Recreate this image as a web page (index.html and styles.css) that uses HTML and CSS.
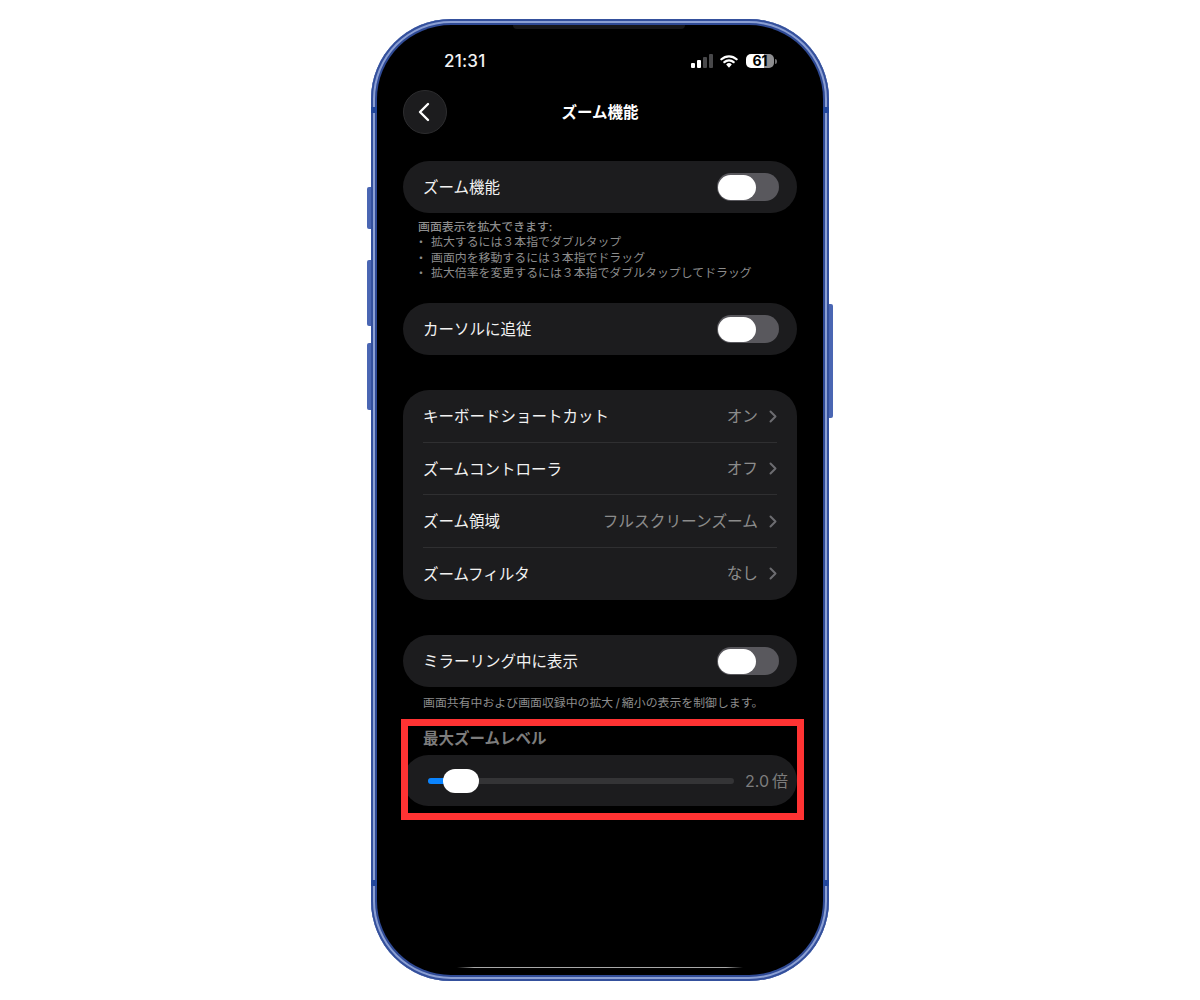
FILE: index.html
```html
<!DOCTYPE html>
<html lang="ja">
<head>
    <meta charset="UTF-8">
    <title>ズーム機能</title>
    <link rel="stylesheet" href="styles.css">
</head>
<body>
    <div class="iphone">
        <span class="side-btn btn-action"></span>
        <span class="side-btn btn-up"></span>
        <span class="side-btn btn-down"></span>
        <span class="side-btn btn-power"></span>
        <span class="band band-tl"></span>
        <span class="band band-tr"></span>
        <span class="band band-bl"></span>
        <span class="band band-br"></span>
        <div class="screen">
            <span class="island"></span>
            <div class="status-bar">
                <span class="time">21:31</span>
                <div class="status-icons">
                    <svg class="signal" width="22" height="14" viewBox="0 0 22 14">
                        <rect x="0" y="9" width="4" height="5" rx="1" fill="#fff"/>
                        <rect x="6" y="6" width="4" height="8" rx="1" fill="#fff"/>
                        <rect x="12" y="3" width="4" height="11" rx="1" fill="#48484a"/>
                        <rect x="18" y="0" width="4" height="14" rx="1" fill="#48484a"/>
                    </svg>
                    <svg class="wifi" width="18" height="14" viewBox="0 0 19 14">
                        <path d="M1.5 5.2a11.6 11.6 0 0 1 16 0" fill="none" stroke="#fff" stroke-width="2.4" stroke-linecap="round"/>
                        <path d="M4.6 8.2a7.2 7.2 0 0 1 9.8 0" fill="none" stroke="#fff" stroke-width="2.4" stroke-linecap="round"/>
                        <path d="M9.5 14l-3-3.4a4.4 4.4 0 0 1 6 0z" fill="#fff"/>
                    </svg>
                    <div class="battery"><span class="battery-num">61</span></div>
                    <span class="battery-tip"></span>
                </div>
            </div>

            <div class="nav-bar">
                <button class="back-button">
                    <svg width="14" height="20" viewBox="0 0 14 20">
                        <path d="M12 2L4 10l8 8" fill="none" stroke="#fff" stroke-width="2.4" stroke-linecap="round" stroke-linejoin="round"/>
                    </svg>
                </button>
                <h1 class="nav-title">ズーム機能</h1>
            </div>

            <div class="content">
                <div class="group">
                    <div class="row">
                        <span class="row-label">ズーム機能</span>
                        <span class="toggle"></span>
                    </div>
                </div>
                <div class="note note-list">
                    <p class="note-head">画面表示を拡大できます:</p>
                    <p class="note-item">拡大するには３本指でダブルタップ</p>
                    <p class="note-item">画面内を移動するには３本指でドラッグ</p>
                    <p class="note-item">拡大倍率を変更するには３本指でダブルタップしてドラッグ</p>
                </div>

                <div class="group group-follow">
                    <div class="row">
                        <span class="row-label">カーソルに追従</span>
                        <span class="toggle"></span>
                    </div>
                </div>

                <div class="group group-links">
                    <div class="row row-link">
                        <span class="row-label">キーボードショートカット</span>
                        <span class="row-value">オン</span>
                        <svg class="chevron" width="8" height="13" viewBox="0 0 8 13"><path d="M1.5 1.5l5 5-5 5" fill="none" stroke="#6c6c70" stroke-width="2" stroke-linecap="round" stroke-linejoin="round"/></svg>
                    </div>
                    <div class="row row-link">
                        <span class="row-label">ズームコントローラ</span>
                        <span class="row-value">オフ</span>
                        <svg class="chevron" width="8" height="13" viewBox="0 0 8 13"><path d="M1.5 1.5l5 5-5 5" fill="none" stroke="#6c6c70" stroke-width="2" stroke-linecap="round" stroke-linejoin="round"/></svg>
                    </div>
                    <div class="row row-link">
                        <span class="row-label">ズーム領域</span>
                        <span class="row-value">フルスクリーンズーム</span>
                        <svg class="chevron" width="8" height="13" viewBox="0 0 8 13"><path d="M1.5 1.5l5 5-5 5" fill="none" stroke="#6c6c70" stroke-width="2" stroke-linecap="round" stroke-linejoin="round"/></svg>
                    </div>
                    <div class="row row-link">
                        <span class="row-label">ズームフィルタ</span>
                        <span class="row-value">なし</span>
                        <svg class="chevron" width="8" height="13" viewBox="0 0 8 13"><path d="M1.5 1.5l5 5-5 5" fill="none" stroke="#6c6c70" stroke-width="2" stroke-linecap="round" stroke-linejoin="round"/></svg>
                    </div>
                </div>

                <div class="group group-mirror">
                    <div class="row">
                        <span class="row-label">ミラーリング中に表示</span>
                        <span class="toggle"></span>
                    </div>
                </div>
                <p class="note note-mirror">画面共有中および画面収録中の拡大&#8201;/&#8201;縮小の表示を制御します。</p>

                <div class="zoom-level">
                    <h2 class="section-title">最大ズームレベル</h2>
                    <div class="slider-row">
                        <div class="slider">
                            <span class="slider-fill"></span>
                            <span class="slider-thumb"></span>
                        </div>
                        <span class="slider-value">2.0&#8201;倍</span>
                    </div>
                </div>
            </div>
            <span class="home-bar"></span>
        </div>
    </div>
    <div class="highlight"></div>
</body>
</html>
```

FILE: styles.css
```css
* {
    box-sizing: border-box;
}

html, body {
    margin: 0;
    height: 1000px;
    overflow: hidden;
}

body {
    position: relative;
    background: #fff;
    font-family: Inter, "Noto Sans CJK JP", sans-serif;
    color: #fff;
}

p, h1, h2 {
    margin: 0;
}

/* phone */
.iphone {
    position: absolute;
    left: 371px;
    top: 19px;
    width: 458px;
    height: 962px;
    border-radius: 80px;
    padding: 6px;
    background: #2f4a95;
    box-shadow: inset 0 0 0 2px #34509c, inset 0 0 0 4px #8b9fd3;
}

.side-btn {
    position: absolute;
    width: 4px;
    background: #4a66b3;
}

.btn-action {
    left: -4px;
    top: 168px;
    height: 42px;
    border-radius: 2px 0 0 2px;
}

.btn-up {
    left: -4px;
    top: 241px;
    height: 66px;
    border-radius: 2px 0 0 2px;
}

.btn-down {
    left: -4px;
    top: 324px;
    height: 67px;
    border-radius: 2px 0 0 2px;
}

.btn-power {
    right: -4px;
    top: 285px;
    height: 114px;
    border-radius: 0 2px 2px 0;
}

.band {
    position: absolute;
    width: 6px;
    height: 6px;
    background: #23479b;
}

.band-tl {
    left: 0;
    top: 88px;
}

.band-tr {
    right: 0;
    top: 88px;
}

.band-bl {
    left: 0;
    top: 861px;
}

.band-br {
    right: 0;
    top: 861px;
}

.screen {
    position: relative;
    height: 100%;
    background: #000;
    border-radius: 74px;
    overflow: hidden;
    padding: 0 26px;
    display: flex;
    flex-direction: column;
}

.island {
    position: absolute;
    left: 136px;
    top: 0;
    width: 172px;
    height: 4px;
    background: #161618;
    border-radius: 0 0 6px 6px;
}

.home-bar {
    position: absolute;
    left: 80px;
    bottom: 7px;
    width: 286px;
    height: 1px;
    background: linear-gradient(to right, #000, #a8a8a8 6%, #a8a8a8 94%, #000);
}

/* status bar */
.status-bar {
    height: 65px;
    padding: 7px 0 0 41px;
    display: flex;
    justify-content: space-between;
    align-items: center;
}

.time {
    font-size: 17px;
    font-weight: 500;
    color: #f2f2f2;
    letter-spacing: 0.2px;
}

.status-icons {
    display: flex;
    align-items: center;
    margin-right: 20px;
}

.signal {
    margin-right: 7px;
}

.wifi {
    margin-right: 8px;
}

.battery {
    width: 28px;
    height: 14px;
    border-radius: 5px;
    background: linear-gradient(to right, #fff 64%, #8e8e90 64%);
    display: flex;
    align-items: center;
    justify-content: center;
}

.battery-num {
    font-size: 14px;
    font-weight: 700;
    color: #000;
    line-height: 14px;
}

.battery-tip {
    width: 2px;
    height: 5px;
    margin-left: 1px;
    background: #6f6f71;
    border-radius: 0 2px 2px 0;
}

/* nav */
.nav-bar {
    height: 44px;
    display: flex;
    align-items: center;
    justify-content: center;
    position: relative;
}

.back-button {
    position: absolute;
    left: 0;
    top: 0;
    width: 44px;
    height: 44px;
    border-radius: 50%;
    background: #1c1c1e;
    border: 1px solid #2e2e30;
    padding: 0 5px 0 0;
    display: flex;
    align-items: center;
    justify-content: center;
}

.nav-title {
    font-size: 15.5px;
    font-weight: 700;
    color: #fff;
    padding-bottom: 2px;
}

/* rows */
.content {
    padding-top: 27px;
    display: flex;
    flex-direction: column;
}

.group {
    background: #1c1c1e;
    border-radius: 26px;
}

.row {
    height: 52px;
    padding: 0 18px 0 20px;
    display: flex;
    align-items: center;
}

.row-label {
    flex: 1;
    font-size: 15.5px;
    color: #f2f2f2;
    padding-bottom: 2px;
}

.toggle {
    position: relative;
    width: 62px;
    height: 28px;
    border-radius: 14px;
    background: #59585d;
}

.toggle:before {
    content: '';
    position: absolute;
    left: 1px;
    top: 1.5px;
    width: 38px;
    height: 25px;
    border-radius: 12.5px;
    background: #fff;
}

.note {
    color: #8c8c8c;
    font-size: 11.9px;
    line-height: 15.25px;
}

.note-list {
    padding: 6px 0 0 15px;
}

.note-head {
    font-weight: 500;
}

.note-item {
    position: relative;
    padding-left: 13px;
}

.note-item:before {
    content: '・';
    position: absolute;
    left: -3px;
}

.group-follow {
    margin-top: 23px;
}

.group-links {
    margin-top: 35px;
}

.row-link {
    padding-right: 20px;
    position: relative;
    height: 52.5px;
}

.row-link + .row-link:before {
    content: '';
    position: absolute;
    left: 20px;
    right: 20px;
    top: -1px;
    height: 1px;
    background: #2f2f31;
}

.row-value {
    font-size: 15.7px;
    color: #8c8c8c;
    padding-bottom: 2px;
}

.chevron {
    margin-left: 11px;
}

.group-mirror {
    margin-top: 35px;
}

.note-mirror {
    padding: 8px 0 0 20px;
    line-height: 15px;
}

/* max zoom level */
.zoom-level {
    margin-top: 17px;
}

.section-title {
    font-size: 15.5px;
    font-weight: 700;
    color: #7d7d7d;
    line-height: 24px;
    padding-left: 20px;
}

.slider-row {
    height: 51px;
    margin-top: 4px;
    background: #1c1c1e;
    border-radius: 26px;
    padding: 0 10px 0 25px;
    display: flex;
    align-items: center;
}

.slider {
    position: relative;
    flex: 1;
    height: 6px;
    border-radius: 3px;
    background: #343436;
}

.slider-fill {
    position: absolute;
    left: 0;
    top: 0;
    width: 24px;
    height: 6px;
    border-radius: 3px 0 0 3px;
    background: #0a84ff;
}

.slider-thumb {
    position: absolute;
    left: 15px;
    top: -9px;
    width: 36px;
    height: 24px;
    border-radius: 12px;
    background: #fff;
}

.slider-value {
    margin-left: 11px;
    width: 42px;
    text-align: right;
    white-space: nowrap;
    font-size: 16px;
    color: #7d7d7d;
    padding-bottom: 2px;
}

/* red annotation box */
.highlight {
    position: absolute;
    left: 401px;
    top: 719px;
    width: 403px;
    height: 101px;
    border: 7px solid #ff3333;
}
```
